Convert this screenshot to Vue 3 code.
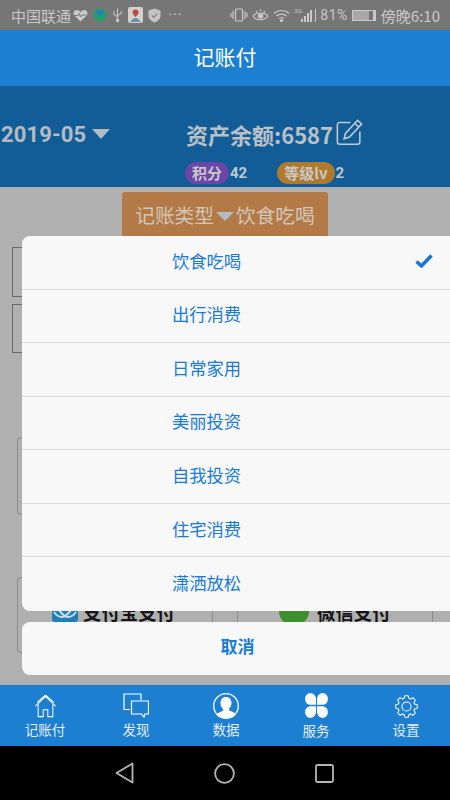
<template>
  <div class="phone">
    <div class="status-bar">
      <div class="status-left">
        <span>中国联通</span>
        <svg width="15" height="13" viewBox="0 0 15 13"><path d="M7.500 12.500 1.400 6.400C-.4 4.400.8 1 3.600 1c1.700 0 3 .9 3.900 2.200C8.400 1.900 9.700 1 11.400 1c2.800 0 4 3.400 2.200 5.400z" fill="#c9c9c9"/><path d="M1.500 6.500h3.500l1.200-2 1.500 3.500 1.300-2h4" fill="none" stroke="#777" stroke-width="1"/></svg>
        <svg class="gap-icon" width="14" height="14" viewBox="0 0 14 14"><circle cx="7" cy="7" r="6.500" fill="#22a06b"/><path d="M3 3.500c3-2.500 7-2 8.500 1-1 2-3.500 1.500-4.500 4-1-1.500-3-2-4-5z" fill="#2c7fb8"/></svg>
        <svg class="gap-icon" width="11" height="16" viewBox="0 0 12 16" fill="none" stroke="#c9c9c9" stroke-width="1.200"><path d="M6 1v14M2 4v3c0 1.500 4 2 4 3M10 4v2c0 1.500-4 1.500-4 3"/><circle cx="6" cy="14" r="1.300" fill="#c9c9c9"/></svg>
        <svg class="gap-icon" width="15" height="16" viewBox="0 0 15 16"><rect width="15" height="16" rx="2" fill="#d4d0cb"/><path d="M7.500 2.500a3 3 0 0 1 3 3c0 2-3 4.500-3 4.500s-3-2.500-3-4.500a3 3 0 0 1 3-3z" fill="#b94a45"/><path d="M2 15l4-4h3l4 4z" fill="#6d8fb3"/></svg>
        <svg class="gap-icon" width="13" height="15" viewBox="0 0 13 15"><path d="M6.500.5 12.500 2.500V8c0 3-3 5.500-6 6.500-3-1-6-3.500-6-6.500V2.500z" fill="#c4c4c4"/><path d="M3.800 7.300l2 2 3.500-3.500" fill="none" stroke="#777" stroke-width="1.100"/></svg>
        <span class="dots">···</span>
      </div>
      <div class="status-right">
        <svg width="18" height="14" viewBox="0 0 18 14" fill="none" stroke="#c9c9c9" stroke-width="1.200"><rect x="5.500" y="1" width="7" height="12" rx="1"/><path d="M3 3v8M1 5v4M15 3v8M17 5v4"/></svg>
        <svg width="17" height="14" viewBox="0 0 17 14" fill="none" stroke="#c9c9c9" stroke-width="1.200"><path d="M1 8c3-4 12-4 15 0-3 5-12 5-15 0z"/><circle cx="8.500" cy="8" r="2.200" fill="#c9c9c9"/><path d="M4 3l1.500 1.500M8.500 1v2M13 3l-1.500 1.500"/></svg>
        <svg width="17" height="13" viewBox="0 0 17 13" fill="none" stroke="#c9c9c9" stroke-width="1.200"><path d="M1 4.500c4-4 11-4 15 0M3.500 7c2.500-2.500 7.500-2.500 10 0M6 9.500c1.500-1.200 3.500-1.200 5 0"/><circle cx="8.500" cy="11.500" r="1" fill="#c9c9c9"/></svg>
        <div class="signal">
          <span class="net">3G</span>
          <i style="height: 3px"></i><i style="height: 6px"></i><i style="height: 9px"></i><i style="height: 12px"></i>
        </div>
        <span class="pct">81%</span>
        <div class="battery"><div class="battery-level"></div></div>
        <span class="clock">傍晚6:10</span>
      </div>
    </div>

    <header class="title-bar">记账付</header>

    <section class="summary">
      <div class="summary-top">
        <div class="month">2019-05<span class="caret"></span></div>
        <div class="balance">
          资产余额:6587
          <svg width="27" height="27" viewBox="0 0 30 30" fill="none" stroke="#c4cdd4" stroke-width="1.700"><path d="M16 4H4a2.500 2.500 0 0 0-2.500 2.500v19A2.500 2.500 0 0 0 4 28h20a2.500 2.500 0 0 0 2.500-2.500V14"/><path d="M24 1.500l4.500 4L15 20l-6 2 1.500-6z"/><path d="M21 5l4.500 4"/></svg>
        </div>
      </div>
      <div class="badges">
        <span class="pill pill-purple">积分</span><b>42</b>
        <span class="pill pill-gold">等级lv</span><b>2</b>
      </div>
    </section>

    <main class="content">
      <div class="type-btn">记账类型<span class="caret caret-small"></span>饮食吃喝</div>
      <div class="ghost-box box-a"></div>
      <div class="ghost-box box-b"></div>
      <div class="ghost-box box-c"></div>
      <div class="pay-row">
        <div class="pay-cell">
          <svg width="26" height="23" viewBox="0 0 26 23"><rect width="26" height="23" rx="3" fill="#1e7fb8"/><path d="M2 9c6 0 8 9 14 9 3 0 6-2 8-5M24 9c-6 0-8 9-14 9-3 0-6-2-8-5" fill="none" stroke="#c9dbe6" stroke-width="2"/></svg>
          <strong>支付宝支付</strong>
        </div>
        <div class="pay-cell pay-wechat">
          <span class="wechat-dot"></span>
          <strong>微信支付</strong>
        </div>
      </div>
    </main>

    <nav class="tabs">
      <div class="tab tab-first">
        <svg class="icon-low" width="23" height="23" viewBox="0 0 24 25" fill="none" stroke="#fff" stroke-width="1.100"><path d="M1 12 12 1.500 23 12M4 10v13.500h5.500V16h5v7.500H20V10M3 8l9-8 9 8"/></svg>
        <span>记账付</span>
      </div>
      <div class="tab">
        <svg width="26" height="25" viewBox="0 0 26 25" fill="none" stroke="#fff" stroke-width="1.200"><path d="M7 16.500H1V1h17v6"/><path d="M8.500 8H25.500v13h-3.500l-1 3-2.500-3h-10z"/></svg>
        <span>发现</span>
      </div>
      <div class="tab">
        <svg width="26" height="26" viewBox="0 0 26 26"><circle cx="13" cy="13" r="12.300" fill="#1c7fd2" stroke="#fff" stroke-width="1.300"/><path d="M13 4c3.500 0 5.500 2.700 5.500 6 0 2.500-1 4.500-2.500 5.800v1.500c2 1.200 5 1.800 6.500 3.500A12 12 0 0 1 13 25a12 12 0 0 1-9.500-3.700c1.500-1.700 4.500-2.300 6.500-3.500v-1.500C8.500 14.500 7.500 12.500 7.500 10c0-3.300 2-6 5.500-6z" fill="#fff"/></svg>
        <span class="label-up">数据</span>
      </div>
      <div class="tab tab-low">
        <svg width="25" height="25" viewBox="0 0 25 25" fill="#fff"><path d="M6 0a6 6 0 0 1 6 6v5.800H6A6 6 0 0 1 6 0zM19 0a6 6 0 0 0-6 6v5.800h6A6 6 0 0 0 19 0zM6 25a6 6 0 0 0 6-6v-5.800H6A6 6 0 0 0 6 25zM19 25a6 6 0 0 1-6-6v-5.800h6A6 6 0 0 1 19 25z"/></svg>
        <span>服务</span>
      </div>
      <div class="tab">
        <svg class="icon-low" width="23" height="23" viewBox="0 0 25 25" fill="none" stroke="#fff" stroke-width="1.100" stroke-linejoin="round"><path :d="gearPath"/><circle cx="12.500" cy="12.500" r="5"/></svg>
        <span>设置</span>
      </div>
    </nav>

    <div class="nav-bar">
      <svg width="19" height="22" viewBox="0 0 19 22" fill="none" stroke="#b5b5b5" stroke-width="1.800" stroke-linejoin="round"><path d="M17.500 1.500v19L1.500 11z"/></svg>
      <svg width="21" height="21" viewBox="0 0 21 21" fill="none" stroke="#b5b5b5" stroke-width="1.800"><circle cx="10.500" cy="10.500" r="9.400"/></svg>
      <svg width="19" height="19" viewBox="0 0 19 19" fill="none" stroke="#b5b5b5" stroke-width="1.800"><rect x="1" y="1" width="17" height="17" rx="1.500"/></svg>
    </div>

    <div class="sheet">
      <ul class="sheet-list">
        <li v-for="(item, i) in options" :key="item">
          <span>{{ item }}</span>
          <svg v-if="i === 0" class="check" width="18" height="14" viewBox="0 0 18 14" fill="none" stroke="#1573d6" stroke-width="3.400"><path d="M1.500 7.500 6.500 12 16.500 1.500"/></svg>
        </li>
      </ul>
      <div class="sheet-cancel">取消</div>
    </div>
  </div>
</template>

<script setup>
const options = ['饮食吃喝', '出行消费', '日常家用', '美丽投资', '自我投资', '住宅消费', '潇洒放松']

// 8 teeth around the centre of a 25x25 box
const gearPath = (() => {
  const points = []
  for (let i = 0; i < 8; i++) {
    const a = (i * Math.PI) / 4
    const step = [[-0.3, 9.2], [-0.16, 11.8], [0.16, 11.8], [0.3, 9.2]]
    step.forEach(([off, r]) => {
      const x = 12.5 + r * Math.sin(a + off)
      const y = 12.5 - r * Math.cos(a + off)
      points.push(x.toFixed(2) + ' ' + y.toFixed(2))
    })
  }
  return 'M' + points.join('L') + 'Z'
})()
</script>

<style>
body {
  margin: 0;
  background: #000;
}
</style>

<style scoped>
.phone {
  position: relative;
  width: 450px;
  height: 800px;
  overflow: hidden;
  display: flex;
  flex-direction: column;
  font-family: "Noto Sans CJK SC", "Roboto", sans-serif;
}

.status-bar {
  height: 30px;
  flex: none;
  box-sizing: border-box;
  padding: 0 10px 0 11px;
  background: #767676;
  color: #c9c9c9;
  display: flex;
  align-items: center;
  justify-content: space-between;
  font-size: 15px;
}

.status-left,
.status-right {
  display: flex;
  align-items: center;
}

.status-left svg {
  margin-left: 2px;
}

.status-left .gap-icon {
  margin-left: 5px;
}

.dots {
  margin-left: 7px;
  letter-spacing: 1px;
  font-family: "Roboto", sans-serif;
}

.status-right {
  gap: 4px;
}

.signal {
  position: relative;
  display: flex;
  align-items: flex-end;
  gap: 1px;
  height: 13px;
  padding-left: 7px;
  padding-right: 3px;
  border-right: 1px solid #c9c9c9;
}

.signal i {
  width: 2px;
  background: #c9c9c9;
}

.net {
  position: absolute;
  left: 0;
  top: -2px;
  font-size: 6px;
  font-family: "Roboto", sans-serif;
}

.pct {
  font-family: "Roboto", sans-serif;
  font-size: 14px;
  letter-spacing: 0.5px;
}

.battery {
  width: 24px;
  height: 11px;
  border: 1px solid #c9c9c9;
  border-right-width: 3px;
  box-sizing: border-box;
  margin: 0 1px 0 0;
}

.battery-level {
  width: 80%;
  height: 100%;
  background: #a8a8a8;
}

.clock {
  font-size: 15px;
}

.title-bar {
  height: 56px;
  flex: none;
  background: #1c7fd2;
  color: #fff;
  font-size: 21px;
  display: flex;
  align-items: center;
  justify-content: center;
  padding-bottom: 5px;
  box-sizing: border-box;
}

.summary {
  height: 101px;
  flex: none;
  box-sizing: border-box;
  background: #125c97;
  color: #b4bcc3;
  padding-top: 31px;
}

.summary-top {
  display: flex;
  align-items: center;
  height: 34px;
}

.month {
  width: 186px;
  padding-left: 1px;
  box-sizing: border-box;
  font-size: 22px;
  font-weight: 700;
  letter-spacing: 0.1px;
  font-family: "Roboto", "Noto Sans CJK SC", sans-serif;
  display: flex;
  align-items: center;
}

.balance {
  display: flex;
  align-items: center;
  font-size: 22px;
  font-weight: 700;
  color: #b9c1c7;
  white-space: nowrap;
}

.balance svg {
  margin-left: 3px;
  margin-top: -3px;
}

.caret {
  display: inline-block;
  width: 0;
  height: 0;
  border-left: 9px solid transparent;
  border-right: 9px solid transparent;
  border-top: 10px solid #b4bcc3;
  margin-left: 6px;
}

.caret-small {
  border-top-width: 9px;
  margin: 0;
}

.badges {
  display: flex;
  align-items: center;
  margin: 11px 0 0 185px;
  font-size: 15px;
}

.badges b {
  margin-left: 1px;
  font-family: "Roboto", sans-serif;
  color: #c0c8ce;
}

.badges b:nth-of-type(1) {
  margin-right: 30px;
}

.pill {
  height: 22px;
  line-height: 22px;
  border-radius: 11px;
  padding: 0 7px;
  color: #c8c8c8;
  font-weight: 700;
}

.pill-purple {
  background: #6c46a8;
}

.pill-gold {
  background: #b07a2e;
}

.content {
  position: relative;
  flex: 1;
  background: #b0b0b0;
}

.type-btn {
  position: absolute;
  left: 122px;
  top: 5px;
  width: 206px;
  height: 60px;
  border-radius: 3px;
  background: #b37a47;
  color: #d2c6ba;
  font-size: 19.700px;
  display: flex;
  justify-content: center;
  align-items: flex-start;
  padding-top: 10px;
  box-sizing: border-box;
  line-height: 25px;
  white-space: nowrap;
}

.type-btn .caret-small {
  margin: 10px 2px 0;
}

.ghost-box {
  position: absolute;
  border: 1px solid #6a6a6a;
  box-sizing: border-box;
}

.box-a {
  left: 12px;
  top: 60px;
  width: 30px;
  height: 50px;
}

.box-b {
  left: 12px;
  top: 117px;
  width: 30px;
  height: 49px;
}

.box-c {
  left: 17px;
  top: 250px;
  width: 30px;
  height: 78px;
  border-color: #8c8c8c;
  border-radius: 4px;
}

.pay-row {
  position: absolute;
  left: 17px;
  top: 390px;
  height: 76px;
  display: flex;
  gap: 24px;
}

.pay-cell {
  width: 196px;
  box-sizing: border-box;
  display: flex;
  align-items: flex-start;
  gap: 5px;
  padding: 21px 0 0 34px;
  border: 1px solid #8c8c8c;
  border-radius: 4px;
  color: #141414;
  font-size: 18.400px;
  white-space: nowrap;
  overflow: hidden;
}

.pay-wechat {
  padding-left: 41px;
  gap: 8px;
}

.wechat-dot {
  width: 30px;
  height: 30px;
  border-radius: 50%;
  background: #3b8f2c;
  flex: none;
  margin-top: -3px;
}

.tabs {
  height: 61px;
  flex: none;
  background: #1c7fd2;
  color: #e6eef5;
  display: grid;
  grid-template-columns: repeat(5, 90px);
  padding: 8px 0 0 1px;
  box-sizing: border-box;
}

.tab {
  display: flex;
  flex-direction: column;
  align-items: center;
  font-size: 13.500px;
  line-height: 18px;
  gap: 2px;
}

.tab-first {
  margin-right: 2px;
}

.icon-low {
  margin-top: 2px;
}

.label-up {
  margin-top: -1px;
}

.tab-low {
  gap: 3px;
  margin-top: 0;
}

.nav-bar {
  height: 54px;
  flex: none;
  background: #000;
  display: flex;
  align-items: center;
  justify-content: space-between;
  padding: 0 116px 0 115px;
}

.sheet {
  position: absolute;
  left: 22px;
  right: 0;
  top: 236px;
}

.sheet-list {
  list-style: none;
  margin: 0;
  padding: 0;
  background: #f8f8f8;
  border-radius: 8px 0 0 8px;
}

.sheet-list li {
  position: relative;
  height: 53.570px;
  box-sizing: border-box;
  border-bottom: 1px solid #dcdcdc;
  color: #1a7bd6;
  font-size: 17.300px;
  display: flex;
  align-items: center;
  padding: 0 0 4px 150px;
}

.sheet-list li:last-child {
  border-bottom: 0;
}

.check {
  position: absolute;
  right: 17px;
  top: 18px;
}

.sheet-cancel {
  margin-top: 11px;
  height: 53px;
  background: #f8f8f8;
  border-radius: 8px 0 0 8px;
  color: #1a7bd6;
  font-size: 17px;
  font-weight: 700;
  display: flex;
  align-items: center;
  justify-content: center;
  padding: 0 0 6px 3px;
  box-sizing: border-box;
}
</style>
